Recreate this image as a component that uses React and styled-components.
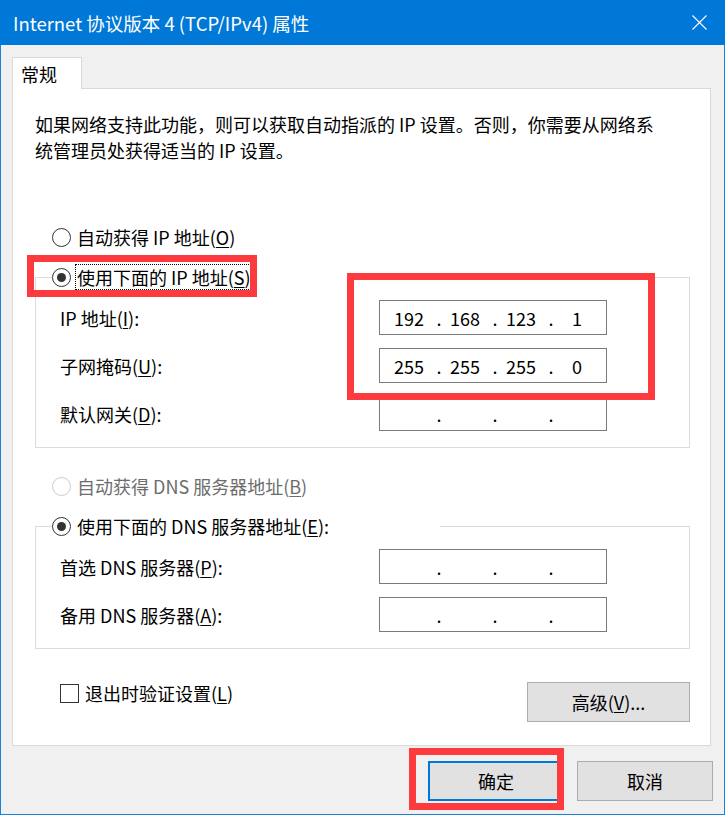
import React from "react";
import styled, { createGlobalStyle } from "styled-components";

const font = `"Noto Sans CJK SC", "Microsoft YaHei", sans-serif`;

const GlobalStyle = createGlobalStyle`
  html, body {
    margin: 0;
    padding: 0;
    background: #f0f0f0;
  }
  * {
    box-sizing: border-box;
  }
`;

const Window = styled.div`
  position: relative;
  width: 725px;
  height: 815px;
  border: 1px solid #1883d7;
  border-top: none;
  background: #f0f0f0;
  font-family: ${font};
  font-size: 18px;
  color: #000;
  display: flex;
  flex-direction: column;
`;

const TitleBar = styled.div`
  height: 45px;
  margin: 0 -1px;
  background: #0078d7;
  color: #fff;
  display: flex;
  align-items: center;
  justify-content: space-between;
  padding: 0 18px 0 13px;
`;

const Title = styled.span`
  font-size: 18.5px;
  line-height: 24px;
`;

const CloseIcon = styled.svg`
  width: 15px;
  height: 15px;
  display: block;
`;

const Body = styled.div`
  flex: 1;
  display: flex;
  flex-direction: column;
  padding: 12px 13px 0 11px;
`;

const TabStrip = styled.div`
  display: flex;
`;

const Tab = styled.div`
  position: relative;
  z-index: 1;
  width: 70px;
  height: 32px;
  margin-bottom: -1px;
  padding-left: 8px;
  background: #fff;
  border: 1px solid #d9d9d9;
  border-bottom: none;
  display: flex;
  align-items: center;
`;

const Panel = styled.div`
  height: 658px;
  background: #fff;
  border: 1px solid #d9d9d9;
  padding: 22px 20px 0 22px;
  display: flex;
  flex-direction: column;
`;

const Description = styled.p`
  margin: 0;
  line-height: 26px;
`;

const RadioRow = styled.label`
  display: flex;
  align-items: center;
  gap: 6px;
  height: 26px;
  margin-left: ${(p) => (p.$inset ? "17px" : "0")};
  margin-top: ${(p) => p.$top || 0}px;
  color: ${(p) => (p.$disabled ? "#6d6d6d" : "#000")};
`;

const RadioCircle = styled.span`
  width: 19px;
  height: 19px;
  flex: none;
  border-radius: 50%;
  border: 1px solid ${(p) => (p.$disabled ? "#cccccc" : "#333333")};
  background: #fff;
  display: flex;
  align-items: center;
  justify-content: center;

  &::after {
    content: "";
    display: ${(p) => (p.$checked ? "block" : "none")};
    width: 9px;
    height: 9px;
    border-radius: 50%;
    background: #333;
  }
`;

const LabelText = styled.span`
  white-space: nowrap;
  line-height: 24px;
  padding: 0 1px;
  margin-left: -1px;
  outline: ${(p) => (p.$focused ? "1px dotted #000" : "none")};
`;

const Mn = styled.span`
  text-decoration: underline;
  text-underline-offset: 2px;
  text-decoration-thickness: 1px;
`;

const Group = styled.fieldset`
  margin: 14px 0 0;
  padding: 10px 16px 16px;
  border: 1px solid #dcdcdc;
  display: flex;
  flex-direction: column;
  gap: 13px;
`;

const GroupLegend = styled.legend`
  width: 388px;
  padding: 0;
`;

const FieldRow = styled.div`
  display: flex;
  align-items: center;
  padding-left: 8px;
`;

const FieldLabel = styled.span`
  width: 319px;
  line-height: 26px;
`;

const IpBox = styled.div`
  width: 228px;
  height: 35px;
  border: 1px solid #7a7a7a;
  background: #fff;
  display: flex;
  align-items: center;
  padding-left: 7px;
  line-height: 26px;
`;

const Octet = styled.span`
  width: 44px;
  text-align: center;
`;

const Dot = styled.span`
  width: 12px;
  padding-left: 4px;
  text-align: center;
`;

const PanelFooter = styled.div`
  display: flex;
  justify-content: space-between;
  align-items: flex-start;
  margin-top: 31px;
`;

const CheckRow = styled.label`
  display: flex;
  align-items: center;
  gap: 6px;
  height: 26px;
  margin-left: 25px;
`;

const CheckBox = styled.span`
  width: 19px;
  height: 19px;
  border: 1px solid #333;
  background: #fff;
`;

const Button = styled.button`
  font-family: ${font};
  font-size: 18px;
  color: #000;
  background: #e1e1e1;
  border: ${(p) => (p.$default ? "2px solid #0078d7" : "1px solid #adadad")};
  width: ${(p) => p.$w}px;
  height: 40px;
  margin-top: ${(p) => p.$top || 0}px;
  padding: 0;
  border-radius: 0;
  display: flex;
  align-items: center;
  justify-content: center;
`;

const DialogButtons = styled.div`
  display: flex;
  justify-content: flex-end;
  gap: 13px;
  margin: 15px -2px 0 0;
`;

const Marker = styled.div`
  position: absolute;
  left: ${(p) => p.$x - 1}px;
  top: ${(p) => p.$y}px;
  width: ${(p) => p.$w}px;
  height: ${(p) => p.$h}px;
  border: 7px solid #fd3a3d;
  pointer-events: none;
  z-index: 5;
`;

const Radio = ({ checked, disabled, focused, inset, top, children }) => (
  <RadioRow $inset={inset} $top={top} $disabled={disabled}>
    <RadioCircle $checked={checked} $disabled={disabled} />
    <LabelText $focused={focused}>{children}</LabelText>
  </RadioRow>
);

const IpField = ({ value = ["", "", "", ""] }) => (
  <IpBox>
    <Octet>{value[0]}</Octet>
    <Dot>.</Dot>
    <Octet>{value[1]}</Octet>
    <Dot>.</Dot>
    <Octet>{value[2]}</Octet>
    <Dot>.</Dot>
    <Octet>{value[3]}</Octet>
  </IpBox>
);

const App = () => {
  return (
    <>
      <GlobalStyle />
      <Window>
        <TitleBar>
          <Title>Internet 协议版本 4 (TCP/IPv4) 属性</Title>
          <CloseIcon viewBox="0 0 15 15">
            <path d="M0.5 0.5L14.5 14.5M14.5 0.5L0.5 14.5" stroke="#fff" strokeWidth="1.1" fill="none" />
          </CloseIcon>
        </TitleBar>
        <Body>
          <TabStrip>
            <Tab>常规</Tab>
          </TabStrip>
          <Panel>
            <Description>
              如果网络支持此功能，则可以获取自动指派的 IP 设置。否则，你需要从网络系
              <br />
              统管理员处获得适当的 IP 设置。
            </Description>

            <Radio inset top={61}>
              自动获得 IP 地址(<Mn>O</Mn>)
            </Radio>

            <Group>
              <GroupLegend>
                <Radio checked focused>
                  使用下面的 IP 地址(<Mn>S</Mn>)
                </Radio>
              </GroupLegend>
              <FieldRow>
                <FieldLabel>
                  IP 地址(<Mn>I</Mn>):
                </FieldLabel>
                <IpField value={["192", "168", "123", "1"]} />
              </FieldRow>
              <FieldRow>
                <FieldLabel>
                  子网掩码(<Mn>U</Mn>):
                </FieldLabel>
                <IpField value={["255", "255", "255", "0"]} />
              </FieldRow>
              <FieldRow>
                <FieldLabel>
                  默认网关(<Mn>D</Mn>):
                </FieldLabel>
                <IpField />
              </FieldRow>
            </Group>

            <Radio inset disabled top={25}>
              自动获得 DNS 服务器地址(<Mn>B</Mn>)
            </Radio>

            <Group>
              <GroupLegend>
                <Radio checked>
                  使用下面的 DNS 服务器地址(<Mn>E</Mn>):
                </Radio>
              </GroupLegend>
              <FieldRow>
                <FieldLabel>
                  首选 DNS 服务器(<Mn>P</Mn>):
                </FieldLabel>
                <IpField />
              </FieldRow>
              <FieldRow>
                <FieldLabel>
                  备用 DNS 服务器(<Mn>A</Mn>):
                </FieldLabel>
                <IpField />
              </FieldRow>
            </Group>

            <PanelFooter>
              <CheckRow>
                <CheckBox />
                <LabelText>
                  退出时验证设置(<Mn>L</Mn>)
                </LabelText>
              </CheckRow>
              <Button $w={163} $top={2}>
                高级(<Mn>V</Mn>)...
              </Button>
            </PanelFooter>
          </Panel>

          <DialogButtons>
            <Button $w={136} $default>
              确定
            </Button>
            <Button $w={136}>取消</Button>
          </DialogButtons>
        </Body>

        <Marker $x={27} $y={255} $w={230} $h={42} />
        <Marker $x={347} $y={273} $w={308} $h={127} />
        <Marker $x={409} $y={748} $w={155} $h={62} />
      </Window>
    </>
  );
};

export default App;
